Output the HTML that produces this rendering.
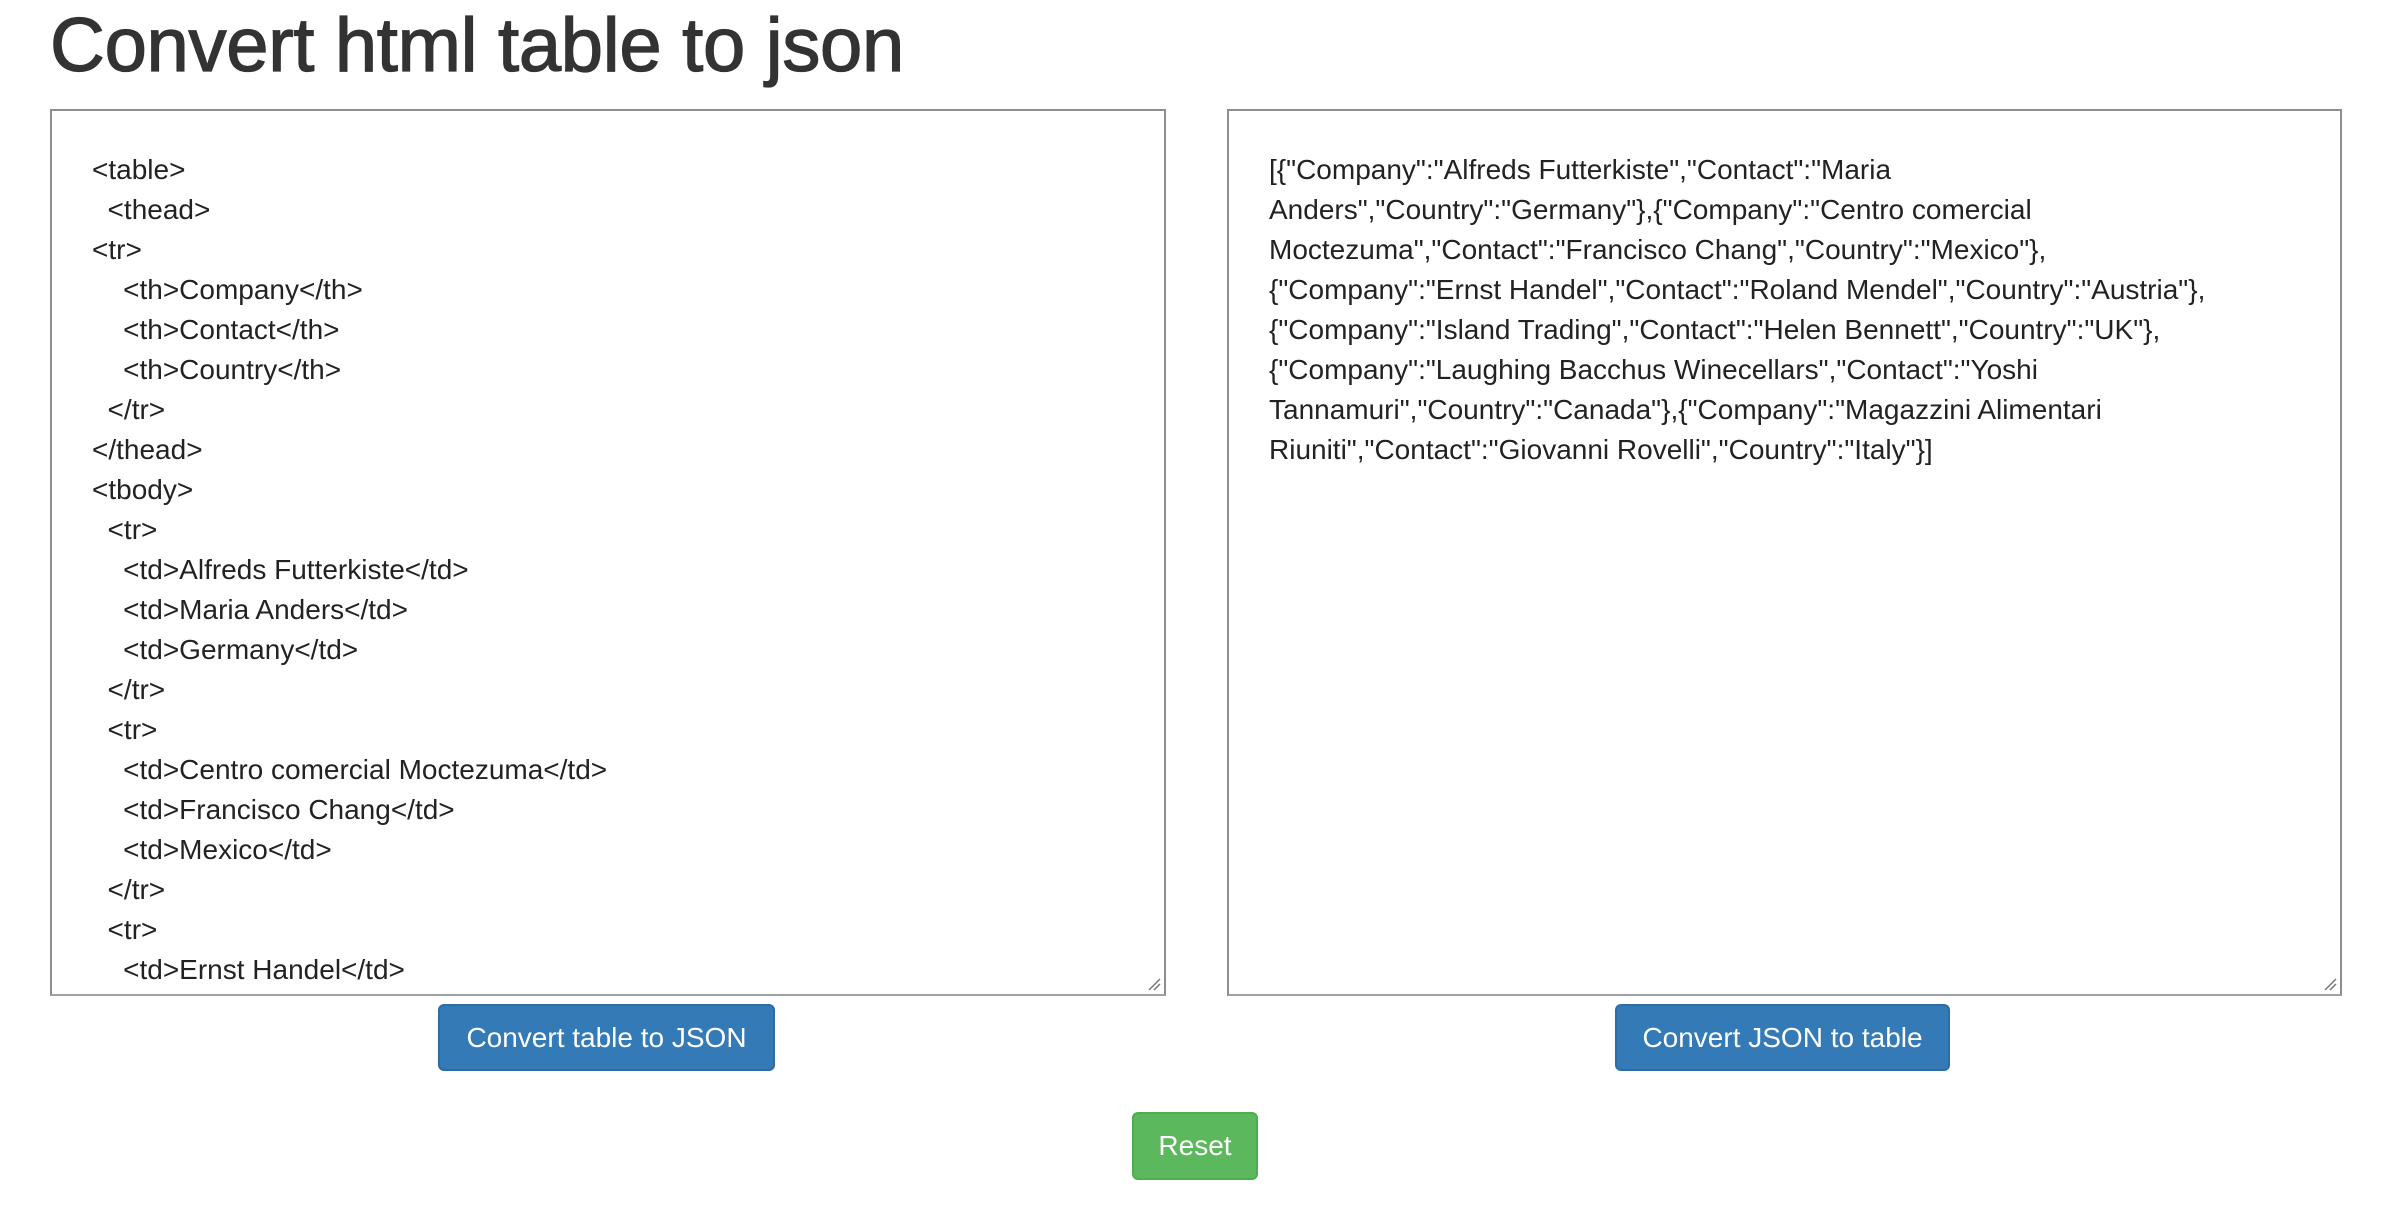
<!DOCTYPE html>
<html><head><meta charset="utf-8"><style>
html,body{margin:0;padding:0;background:#fff;width:2390px;height:1226px;overflow:hidden}
body{font-family:"Liberation Sans",Arial,sans-serif;color:#333;position:relative}
h1{position:absolute;left:50px;top:8px;margin:0;font-size:76px;font-weight:normal;line-height:1;color:#333;letter-spacing:-0.3px;-webkit-text-stroke:1.3px #333}
.ta{position:absolute;top:109px;border:2px solid #8e8e8e;border-bottom-color:#a0a0a0;box-sizing:border-box;height:887px;overflow:hidden;font-size:28px;line-height:40px;padding:39px 40px 0 40px;white-space:pre;color:#222}
.grip{position:absolute;right:3px;bottom:3px;width:14px;height:14px}
.btn{position:absolute;color:#fff;font-size:28px;border-radius:6px;box-sizing:border-box;text-align:center;line-height:63px;height:67px}
.blue{background:#337ab7;border:2px solid #2e6da4}
.green{background:#5cb85c;border:2px solid #4cae4c}
</style></head><body>
<h1>Convert html table to json</h1>
<div class="ta" style="left:50px;width:1116px">&lt;table&gt;
  &lt;thead&gt;
&lt;tr&gt;
    &lt;th&gt;Company&lt;/th&gt;
    &lt;th&gt;Contact&lt;/th&gt;
    &lt;th&gt;Country&lt;/th&gt;
  &lt;/tr&gt;
&lt;/thead&gt;
&lt;tbody&gt;
  &lt;tr&gt;
    &lt;td&gt;Alfreds Futterkiste&lt;/td&gt;
    &lt;td&gt;Maria Anders&lt;/td&gt;
    &lt;td&gt;Germany&lt;/td&gt;
  &lt;/tr&gt;
  &lt;tr&gt;
    &lt;td&gt;Centro comercial Moctezuma&lt;/td&gt;
    &lt;td&gt;Francisco Chang&lt;/td&gt;
    &lt;td&gt;Mexico&lt;/td&gt;
  &lt;/tr&gt;
  &lt;tr&gt;
    &lt;td&gt;Ernst Handel&lt;/td&gt;
<svg class="grip" viewBox="0 0 14 14"><path d="M13 2L2 13M13 7L7 13" stroke="#777" stroke-width="1.5"/></svg></div>
<div class="ta" style="left:1227px;width:1115px">[{"Company":"Alfreds Futterkiste","Contact":"Maria
Anders","Country":"Germany"},{"Company":"Centro comercial
Moctezuma","Contact":"Francisco Chang","Country":"Mexico"},
{"Company":"Ernst Handel","Contact":"Roland Mendel","Country":"Austria"},
{"Company":"Island Trading","Contact":"Helen Bennett","Country":"UK"},
{"Company":"Laughing Bacchus Winecellars","Contact":"Yoshi
Tannamuri","Country":"Canada"},{"Company":"Magazzini Alimentari
Riuniti","Contact":"Giovanni Rovelli","Country":"Italy"}]
<svg class="grip" viewBox="0 0 14 14"><path d="M13 2L2 13M13 7L7 13" stroke="#777" stroke-width="1.5"/></svg></div>
<div class="btn blue" style="left:438px;top:1004px;width:337px">Convert table to JSON</div>
<div class="btn blue" style="left:1615px;top:1004px;width:335px">Convert JSON to table</div>
<div class="btn green" style="left:1132px;top:1112px;width:126px;height:68px">Reset</div>
</body></html>
